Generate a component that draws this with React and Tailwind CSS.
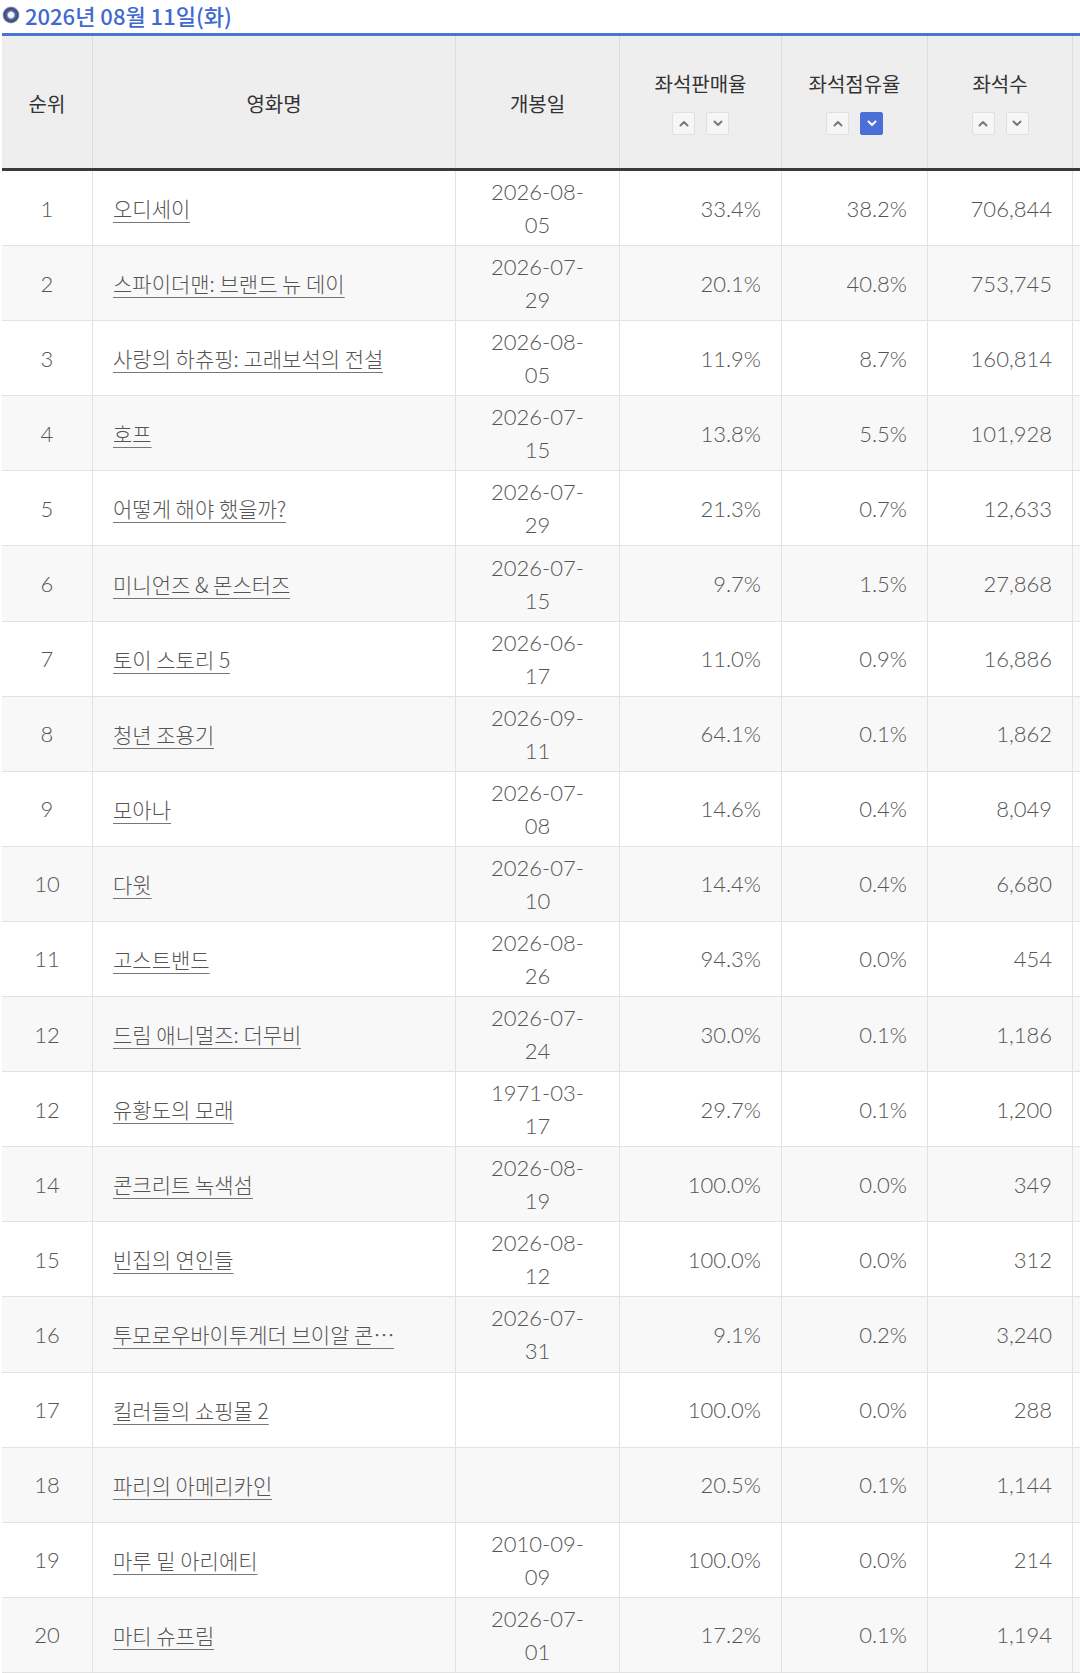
import React from 'react';

const rows = [
  { rank: 1, name: '오디세이', date: ['2026-08-', '05'], sales: '33.4%', share: '38.2%', seats: '706,844' },
  { rank: 2, name: '스파이더맨: 브랜드 뉴 데이', date: ['2026-07-', '29'], sales: '20.1%', share: '40.8%', seats: '753,745' },
  { rank: 3, name: '사랑의 하츄핑: 고래보석의 전설', date: ['2026-08-', '05'], sales: '11.9%', share: '8.7%', seats: '160,814' },
  { rank: 4, name: '호프', date: ['2026-07-', '15'], sales: '13.8%', share: '5.5%', seats: '101,928' },
  { rank: 5, name: '어떻게 해야 했을까?', date: ['2026-07-', '29'], sales: '21.3%', share: '0.7%', seats: '12,633' },
  { rank: 6, name: '미니언즈 & 몬스터즈', date: ['2026-07-', '15'], sales: '9.7%', share: '1.5%', seats: '27,868' },
  { rank: 7, name: '토이 스토리 5', date: ['2026-06-', '17'], sales: '11.0%', share: '0.9%', seats: '16,886' },
  { rank: 8, name: '청년 조용기', date: ['2026-09-', '11'], sales: '64.1%', share: '0.1%', seats: '1,862' },
  { rank: 9, name: '모아나', date: ['2026-07-', '08'], sales: '14.6%', share: '0.4%', seats: '8,049' },
  { rank: 10, name: '다윗', date: ['2026-07-', '10'], sales: '14.4%', share: '0.4%', seats: '6,680' },
  { rank: 11, name: '고스트밴드', date: ['2026-08-', '26'], sales: '94.3%', share: '0.0%', seats: '454' },
  { rank: 12, name: '드림 애니멀즈: 더무비', date: ['2026-07-', '24'], sales: '30.0%', share: '0.1%', seats: '1,186' },
  { rank: 12, name: '유황도의 모래', date: ['1971-03-', '17'], sales: '29.7%', share: '0.1%', seats: '1,200' },
  { rank: 14, name: '콘크리트 녹색섬', date: ['2026-08-', '19'], sales: '100.0%', share: '0.0%', seats: '349' },
  { rank: 15, name: '빈집의 연인들', date: ['2026-08-', '12'], sales: '100.0%', share: '0.0%', seats: '312' },
  { rank: 16, name: '투모로우바이투게더 브이알 콘…', date: ['2026-07-', '31'], sales: '9.1%', share: '0.2%', seats: '3,240' },
  { rank: 17, name: '킬러들의 쇼핑몰 2', date: null, sales: '100.0%', share: '0.0%', seats: '288' },
  { rank: 18, name: '파리의 아메리카인', date: null, sales: '20.5%', share: '0.1%', seats: '1,144' },
  { rank: 19, name: '마루 밑 아리에티', date: ['2010-09-', '09'], sales: '100.0%', share: '0.0%', seats: '214' },
  { rank: 20, name: '마티 슈프림', date: ['2026-07-', '01'], sales: '17.2%', share: '0.1%', seats: '1,194' },
];

const Chevron = ({ down, active }) => (
  <svg width="10" height="7" viewBox="0 0 10 7" fill="none">
    <path
      d={down ? 'M1.5 1.5 L5 5 L8.5 1.5' : 'M1.5 5.5 L5 2 L8.5 5.5'}
      stroke={active ? '#ffffff' : '#7a7a7a'}
      strokeWidth="2"
      strokeLinecap="round"
      strokeLinejoin="round"
    />
  </svg>
);

const SortButtons = ({ active }) => (
  <div className="flex gap-[11px]">
    <button className="flex h-[23px] w-[23px] items-center justify-center rounded-[2px] border border-[#e0e0e0] bg-[#f6f6f6]">
      <Chevron />
    </button>
    <button
      className={
        active === 'down'
          ? 'flex h-[23px] w-[23px] items-center justify-center rounded-[2px] border border-[#4a70d8] bg-[#4a70d8]'
          : 'flex h-[23px] w-[23px] items-center justify-center rounded-[2px] border border-[#e0e0e0] bg-[#f6f6f6]'
      }
    >
      <Chevron down active={active === 'down'} />
    </button>
  </div>
);

const SortHead = ({ label, active }) => (
  <div className="flex flex-col items-center justify-center gap-[14px] border-r border-[#dcdcdc]">
    <span className="leading-[28px]">{label}</span>
    <SortButtons active={active} />
  </div>
);

const App = () => {
  return (
    <div className="w-[1080px] overflow-hidden bg-white font-['Lato','Noto_Sans_CJK_KR',sans-serif] text-[#555]">
      {/* date title */}
      <div className="flex h-[33px] items-center gap-[5px] pb-[4px] pl-[2px]">
        <svg width="18" height="18" viewBox="0 0 18 18">
          <defs>
            <radialGradient id="ring" cx="50%" cy="50%" r="50%">
              <stop offset="30%" stopColor="#f4f5fa" />
              <stop offset="50%" stopColor="#5d6a9e" />
              <stop offset="78%" stopColor="#3a4679" />
              <stop offset="100%" stopColor="#aab2d0" />
            </radialGradient>
          </defs>
          <circle cx="9" cy="9" r="8.5" fill="url(#ring)" />
        </svg>
        <h2 className="font-['Noto_Sans_CJK_KR',sans-serif] text-[22px] font-medium leading-[30px] text-[#4169d0]">
          2026년 08월 11일(화)
        </h2>
      </div>

      <div className="ml-[2px] w-[1230px] border-t-[3px] border-[#4a72d8]">
        {/* header */}
        <div className="grid h-[135px] grid-cols-[91px_363px_164px_162px_146px_145px_159px] border-b-[3px] border-[#3a3a3a] bg-[#eeeeee] font-['Noto_Sans_CJK_KR',sans-serif] text-[20px] text-[#333]">
          <div className="flex items-center justify-center border-r border-[#dcdcdc] pt-[3px]">순위</div>
          <div className="flex items-center justify-center border-r border-[#dcdcdc] pt-[3px]">영화명</div>
          <div className="flex items-center justify-center border-r border-[#dcdcdc] pt-[3px]">개봉일</div>
          <SortHead label="좌석판매율" />
          <SortHead label="좌석점유율" active="down" />
          <SortHead label="좌석수" />
          <div />
        </div>

        {/* body */}
        {rows.map((r, i) => (
          <div
            key={i}
            className={
              i % 2 === 1
                ? 'grid h-[75.1px] grid-cols-[91px_363px_164px_162px_146px_145px_159px] border-b border-[#e2e2e2] bg-[#f8f8f8] text-[22px] font-light'
                : 'grid h-[75.1px] grid-cols-[91px_363px_164px_162px_146px_145px_159px] border-b border-[#e2e2e2] bg-white text-[22px] font-light'
            }
          >
            <div className="flex items-center justify-center border-r border-[#e2e2e2]">{r.rank}</div>
            <div className="flex min-w-0 items-center border-r border-[#e2e2e2] px-5">
              <a className="truncate font-['Noto_Sans_CJK_KR',sans-serif] text-[21px] font-light leading-[30px] underline decoration-[#777] underline-offset-[5px]">
                {r.name}
              </a>
            </div>
            <div className="flex flex-col items-center justify-center border-r border-[#e2e2e2] leading-[33px]">
              {r.date && (
                <>
                  <span>{r.date[0]}</span>
                  <span>{r.date[1]}</span>
                </>
              )}
            </div>
            <div className="flex items-center justify-end border-r border-[#e2e2e2] pr-5">{r.sales}</div>
            <div className="flex items-center justify-end border-r border-[#e2e2e2] pr-5">{r.share}</div>
            <div className="flex items-center justify-end border-r border-[#e2e2e2] pr-5">{r.seats}</div>
            <div />
          </div>
        ))}
      </div>
    </div>
  );
};

export default App;
